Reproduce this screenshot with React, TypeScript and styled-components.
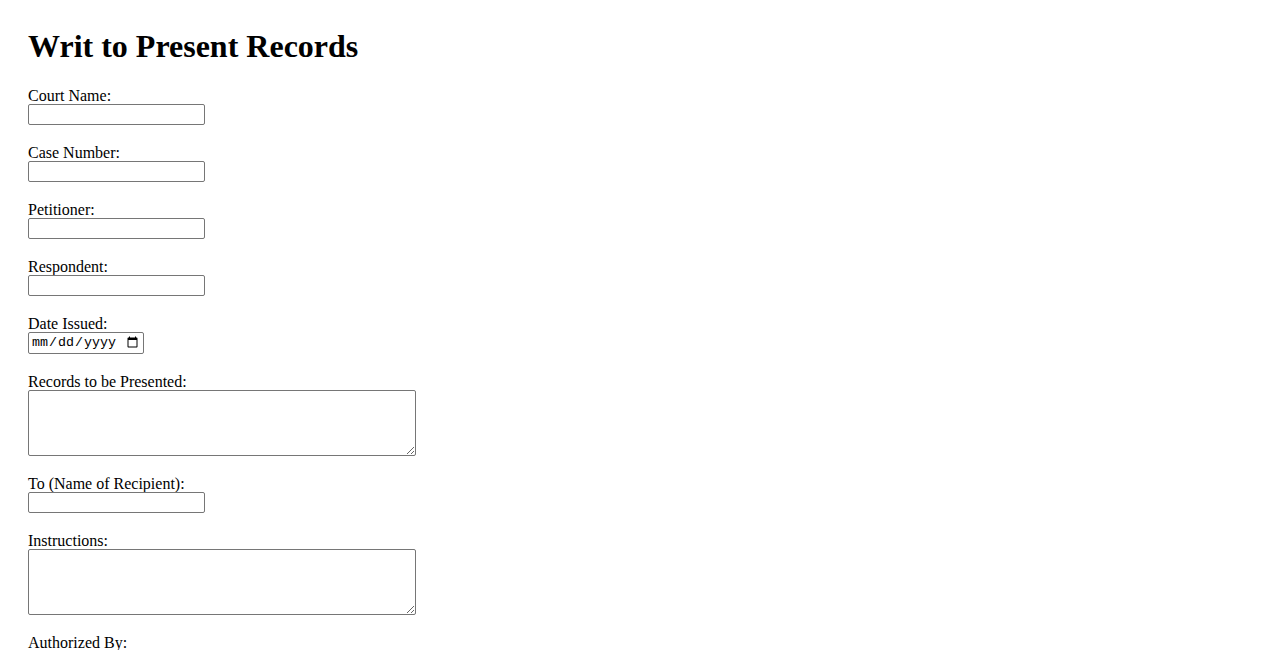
import React from 'react';
import styled, { createGlobalStyle } from 'styled-components';

const GlobalStyle = createGlobalStyle`
  body {
    margin: 8px;
    background: #ffffff;
    color: #000000;
    font-family: "Liberation Serif", "Times New Roman", serif;
  }
`;

const Page = styled.div`
  padding: 20px;
`;

const Title = styled.h1`
  font-size: 32px;
  font-weight: bold;
  line-height: 37px;
  margin: 0 0 22px;
`;

const Form = styled.form`
  display: flex;
  flex-direction: column;
  align-items: flex-start;
`;

const Field = styled.div`
  display: flex;
  flex-direction: column;
  align-items: flex-start;
  margin-bottom: 19px;
`;

const Label = styled.label`
  font-size: 16px;
  line-height: 18px;
  margin-bottom: -1px;
`;

const TextInput = styled.input<{ $width?: number }>`
  box-sizing: border-box;
  width: ${p => p.$width ?? 177}px;
  height: 21px;
  margin: 0;
  padding: 1px 2px;
  border: 1px solid #767676;
  border-radius: 2px;
  background: #ffffff;
  font-family: "Liberation Sans", Arial, sans-serif;
  font-size: 13.33px;
`;

const DateInput = styled(TextInput)`
  height: 22px;
  font-family: "Liberation Mono", "DejaVu Sans Mono", monospace;
`;

const TextArea = styled.textarea`
  box-sizing: border-box;
  width: 388px;
  height: 66px;
  margin: 0;
  padding: 2px;
  border: 1px solid #767676;
  border-radius: 2px;
  font-family: "Liberation Mono", monospace;
  font-size: 13.33px;
`;

const SubmitButton = styled.button`
  font-family: "Liberation Sans", Arial, sans-serif;
  font-size: 13.33px;
  padding: 1px 6px;
`;

type FieldDef = { id: string; label: string; kind: 'text' | 'date' | 'area' };

const fields: FieldDef[] = [
  { id: 'court', label: 'Court Name:', kind: 'text' },
  { id: 'case', label: 'Case Number:', kind: 'text' },
  { id: 'petitioner', label: 'Petitioner:', kind: 'text' },
  { id: 'respondent', label: 'Respondent:', kind: 'text' },
  { id: 'date', label: 'Date Issued:', kind: 'date' },
  { id: 'records', label: 'Records to be Presented:', kind: 'area' },
  { id: 'recipient', label: 'To (Name of Recipient):', kind: 'text' },
  { id: 'instructions', label: 'Instructions:', kind: 'area' },
  { id: 'authorized', label: 'Authorized By:', kind: 'text' },
];

export default function App() {
  return (
    <Page>
      <GlobalStyle />
      <Title>Writ to Present Records</Title>
      <Form onSubmit={e => e.preventDefault()}>
        {fields.map(f => (
          <Field key={f.id}>
            <Label htmlFor={f.id}>{f.label}</Label>
            {f.kind === 'text' && <TextInput id={f.id} type="text" />}
            {f.kind === 'date' && <DateInput id={f.id} type="date" $width={116} />}
            {f.kind === 'area' && <TextArea id={f.id} />}
          </Field>
        ))}
        <SubmitButton type="submit">Submit</SubmitButton>
      </Form>
    </Page>
  );
}
